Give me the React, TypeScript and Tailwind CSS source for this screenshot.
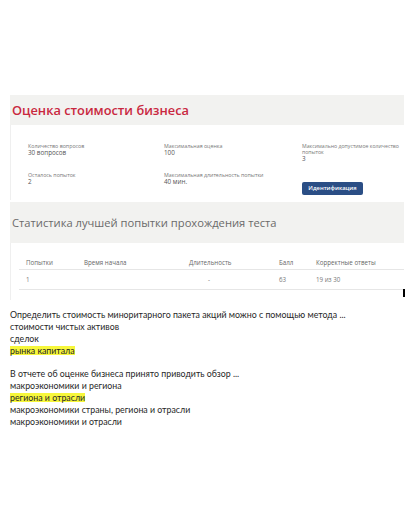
export default function App() {
  return (
    <div
      className="w-[406px] h-[516px] bg-white overflow-hidden pt-[95px]"
      style={{ fontFamily: '"Open Sans", "Noto Sans", sans-serif' }}
    >
      <section className="ml-[10px] w-[394px]">
        <div className="h-[30px] bg-[#f2f2f0] flex items-center pl-[2px]">
          <h1 className="text-[12.8px] font-semibold text-[#c9283f] leading-none">Оценка стоимости бизнеса</h1>
        </div>

        <div className="h-[75px] bg-white border-l border-[#efefef] pt-[18px] pl-[17px]">
          <div className="flex h-[29px]">
            <div className="w-[136px] shrink-0">
              <div className="text-[5.3px] leading-[6px] text-[#777]">Количество вопросов</div>
              <div className="text-[6.3px] leading-[7px] text-[#555]">30 вопросов</div>
            </div>
            <div className="w-[138px] shrink-0">
              <div className="text-[5.3px] leading-[6px] text-[#777]">Максимальная оценка</div>
              <div className="text-[6.3px] leading-[7px] text-[#555]">100</div>
            </div>
            <div className="flex-1">
              <div className="text-[5.2px] leading-[6px] text-[#777]">Максимально допустимое количество попыток</div>
              <div className="text-[6.3px] leading-[7px] text-[#555]">3</div>
            </div>
          </div>
          <div className="flex">
            <div className="w-[136px] shrink-0">
              <div className="text-[5.3px] leading-[6px] text-[#777]">Осталось попыток</div>
              <div className="text-[6.3px] leading-[7px] text-[#555]">2</div>
            </div>
            <div className="w-[138px] shrink-0">
              <div className="text-[5.3px] leading-[6px] text-[#777]">Максимальная длительность попытки</div>
              <div className="text-[6.3px] leading-[7px] text-[#555]">40 мин.</div>
            </div>
            <div>
              <button className="mt-[1px] h-[13px] w-[61px] rounded-[2px] bg-[#2b4e85] text-white text-[5.8px] font-semibold leading-none">
                Идентификация
              </button>
            </div>
          </div>
        </div>

        <div className="mt-[2px] h-[41px] bg-[#f2f2f0] flex items-center pl-[2px]">
          <h2 className="text-[11.2px] text-[#6a6a6a] leading-none">Статистика лучшей попытки прохождения теста</h2>
        </div>

        <div className="relative h-[57px] bg-white border-l border-[#efefef] pt-[14px] pl-[8px] text-[6.2px] text-[#666]">
          <div className="flex h-[13px] items-center border-b border-[#e6e6e6]">
            <div className="w-[58px] shrink-0 pl-[7px]">Попытки</div>
            <div className="w-[105px] shrink-0 pl-[7px]">Время начала</div>
            <div className="w-[90px] shrink-0 pl-[7px]">Длительность</div>
            <div className="w-[37px] shrink-0 pl-[7px]">Балл</div>
            <div className="flex-1 pl-[7px]">Корректные ответы</div>
          </div>
          <div className="flex h-[20px] items-center border-b border-[#e6e6e6] text-[#777]">
            <div className="w-[58px] shrink-0 pl-[7px]">1</div>
            <div className="w-[105px] shrink-0 pl-[7px]"></div>
            <div className="w-[90px] shrink-0 pl-[26px]">-</div>
            <div className="w-[37px] shrink-0 pl-[7px]">63</div>
            <div className="flex-1 pl-[7px]">19 из 30</div>
          </div>
          <span className="absolute right-[-1px] bottom-[3px] w-[2px] h-[8px] bg-black"></span>
        </div>
      </section>

      <div
        className="mt-[9px] ml-[10px] text-[8.8px] leading-[12px] text-[#262626]"
        style={{ fontFamily: 'Lato, "Noto Sans", sans-serif' }}
      >
        <div>Определить стоимость миноритарного пакета акций можно с помощью метода ...</div>
        <div>стоимости чистых активов</div>
        <div>сделок</div>
        <div>
          <span className="inline-block leading-[9px] bg-[#f7f73b]">рынка капитала</span>
        </div>
        <div className="mt-[11px]">В отчете об оценке бизнеса принято приводить обзор ...</div>
        <div>макроэкономики и региона</div>
        <div>
          <span className="inline-block leading-[9px] bg-[#f7f73b]">региона и отрасли</span>
        </div>
        <div>макроэкономики страны, региона и отрасли</div>
        <div>макроэкономики и отрасли</div>
      </div>
    </div>
  );
}
